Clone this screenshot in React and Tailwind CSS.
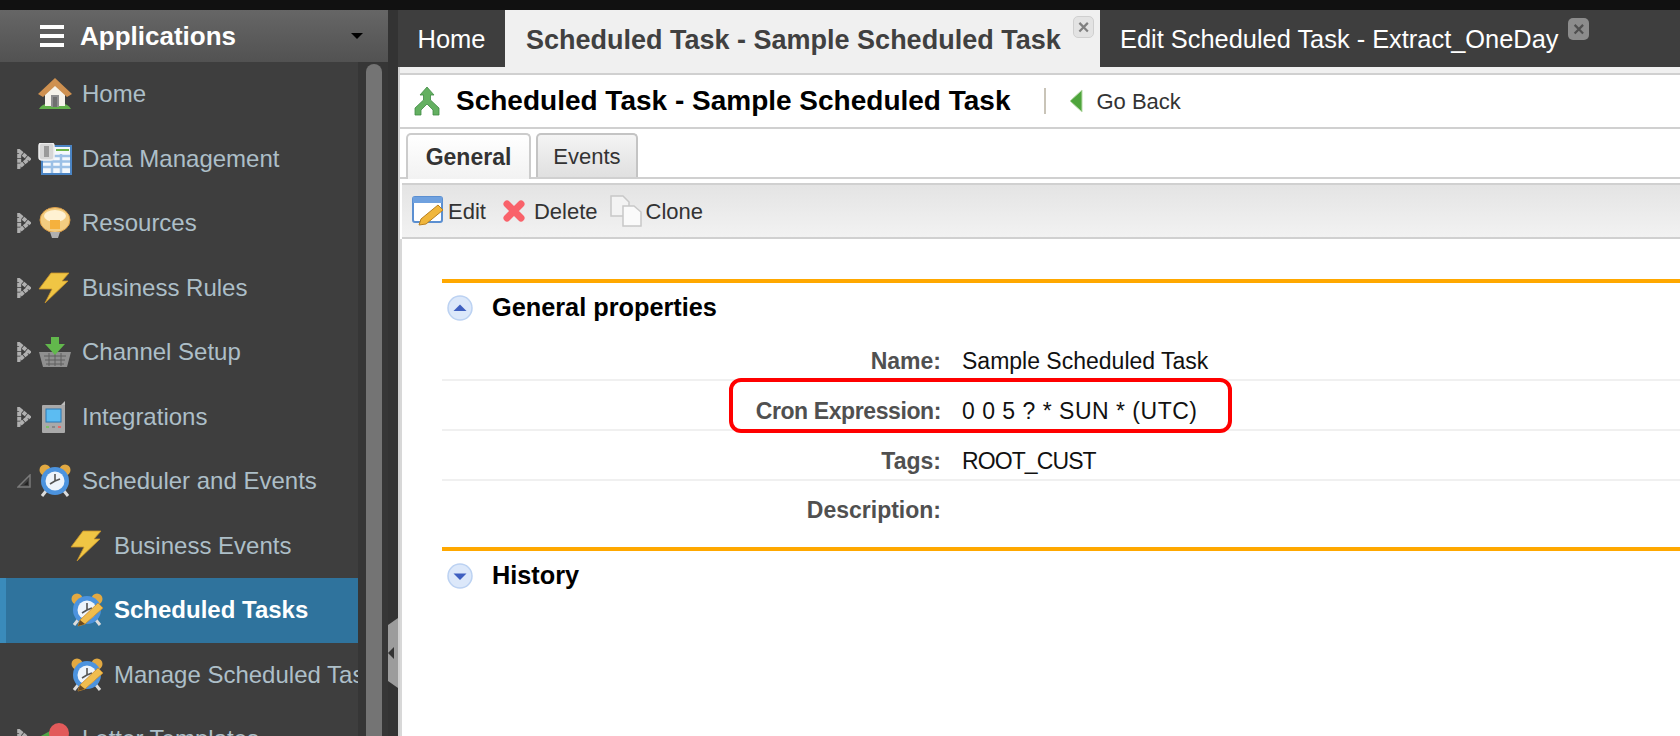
import React from "react";

const Home = () => (
  <svg width="34" height="32" viewBox="0 0 34 32">
    <path d="M1 31 Q4 26 9 26 H25 Q30 26 33 31 Z" fill="#62b04a" />
    <path d="M7 14 L17 6 L27 14 V28 H7 Z" fill="#f6f3ea" />
    <rect x="13" y="17" width="8" height="12" fill="#8f8f8f" />
    <rect x="15" y="19" width="4" height="10" fill="#6f6f6f" />
    <path d="M0 16 L17 0 L34 16 L29 19 L17 8 L5 19 Z" fill="#cf9150" />
  </svg>
);
const Grid = () => (
  <svg width="34" height="32" viewBox="0 0 34 32">
    <rect x="4" y="3" width="29" height="28" fill="#f4f8fd" stroke="#4b85c5" strokeWidth="2" />
    <path d="M5 13 H32 M5 18.5 H32 M5 24 H32 M14 11 V30 M23 11 V30" stroke="#9cc0e6" strokeWidth="2.5" />
    <path d="M18 7 H31" stroke="#6cb548" strokeWidth="2" />
    <rect x="1" y="0" width="15" height="17" rx="3" fill="#d6d6d6" stroke="#f0f0f0" strokeWidth="1.5" />
    <rect x="6" y="3" width="5" height="11" fill="#9a9a9a" />
  </svg>
);
const Bulb = () => (
  <svg width="34" height="32" viewBox="0 0 34 32">
    <ellipse cx="17" cy="13" rx="15" ry="12.5" fill="#f3cc80" stroke="#dd9f48" />
    <ellipse cx="17" cy="9" rx="11" ry="6" fill="#fff1d2" />
    <rect x="12" y="13" width="10" height="9" fill="#f5b13d" />
    <path d="M12 25 H22 L20 31 H14 Z" fill="#b0b0b0" />
  </svg>
);
const Bolt = () => (
  <svg width="34" height="32" viewBox="0 0 34 32">
    <path d="M13 1 H31 L24 9 H30 L7 31 L14 17 H1 Z" fill="#f0c544" stroke="#c8932a" strokeWidth="0.8" />
  </svg>
);
const Basket = () => (
  <svg width="34" height="32" viewBox="0 0 34 32">
    <path d="M1 16 H33 L29 31 H5 Z" fill="#8f8f8f" />
    <path d="M6 20 H28 M7 24 H27 M8 28 H26 M11 17 V30 M17 17 V30 M23 17 V30" stroke="#5f5f5f" />
    <path d="M13 1 H21 V8 H27 L17 19 L7 8 H13 Z" fill="#62b84c" />
  </svg>
);
const Device = () => (
  <svg width="34" height="32" viewBox="0 0 34 32">
    <path d="M23 4 L27 0 V5 Z" fill="#bdbdbd" />
    <rect x="4" y="4" width="23" height="28" rx="1" fill="#a9a9a9" />
    <rect x="8" y="8" width="15" height="13" fill="#5cbcf2" stroke="#2a79b4" />
    <rect x="8" y="25" width="3" height="2" fill="#7cc06a" />
    <rect x="14" y="25" width="3" height="2" fill="#888888" />
    <rect x="20" y="25" width="3" height="2" fill="#e26a6a" />
  </svg>
);
const Clock = ({ pencil = false }) => (
  <svg width="34" height="34" viewBox="0 0 34 34">
    <circle cx="7" cy="6" r="5.5" fill="#e2a942" />
    <circle cx="27" cy="6" r="5.5" fill="#e2a942" />
    <path d="M8 27 L4 32 M26 27 L30 32" stroke="#dcdcdc" strokeWidth="3" />
    <circle cx="17" cy="17" r="14" fill="#4c93de" />
    <circle cx="17" cy="17" r="9.5" fill="#eef4fb" />
    <path d="M17 10 V17 L12 20 M17 17 L22 15" stroke="#555" strokeWidth="1.6" fill="none" />
    {pencil && (
      <>
        <path d="M10 27 L28 10 L33 15 L15 31 L8 33 Z" fill="#f0bd4e" stroke="#c98a2b" strokeWidth="0.8" />
        <path d="M8 33 L10 27 L15 31 Z" fill="#6a4a20" />
      </>
    )}
  </svg>
);
const Letter = () => (
  <svg width="34" height="32" viewBox="0 0 34 32">
    <path d="M1 14 L12 8 V20 Z" fill="#4ea645" />
    <circle cx="21" cy="10" r="10" fill="#e25a5a" />
  </svg>
);
const Expand = () => (
  <svg className="blur-[0.4px]" width="14" height="20" viewBox="0 0 14 20">
    <path d="M2.2 2.2 L11.8 10 L2.2 17.8 Z" fill="#3e3e3e" stroke="#b0b0b0" strokeWidth="4" strokeDasharray="4 0.8" />
  </svg>
);
const Collapse = () => (
  <svg width="14" height="14" viewBox="0 0 14 14">
    <path d="M13 1 V13 H1 Z" fill="#3e3e3e" stroke="#7a7a7a" strokeWidth="1.5" />
    <path d="M11 7 V11 H7 Z" fill="#222222" />
  </svg>
);

const items = [
  { label: "Home", icon: <Home />, arrow: null },
  { label: "Data Management", icon: <Grid />, arrow: "e" },
  { label: "Resources", icon: <Bulb />, arrow: "e" },
  { label: "Business Rules", icon: <Bolt />, arrow: "e" },
  { label: "Channel Setup", icon: <Basket />, arrow: "e" },
  { label: "Integrations", icon: <Device />, arrow: "e" },
  { label: "Scheduler and Events", icon: <Clock />, arrow: "c" },
  { label: "Business Events", icon: <Bolt />, child: true },
  { label: "Scheduled Tasks", icon: <Clock pencil />, child: true, active: true },
  { label: "Manage Scheduled Tasks", icon: <Clock pencil />, child: true },
  { label: "Letter Templates", icon: <Letter />, arrow: "e" },
];

function NavRow({ item }) {
  return (
    <div
      className={`flex h-[64.5px] shrink-0 items-center whitespace-nowrap ${
        item.active ? "border-l-[6px] border-[#3a8bbb] bg-[#2f739d] pl-[64px]" : item.child ? "pl-[70px]" : "pl-[17px]"
      }`}
    >
      {!item.child && (
        <span className="flex w-[21px] shrink-0 items-center justify-start">
          {item.arrow === "e" && <Expand />}
          {item.arrow === "c" && <Collapse />}
        </span>
      )}
      <span className="flex h-[34px] w-[34px] shrink-0 items-center justify-center blur-[0.5px]">{item.icon}</span>
      <span className={`ml-[10px] text-[24px] ${item.active ? "font-bold text-white" : "text-[#adbfc8]"}`}>{item.label}</span>
    </div>
  );
}

function Sidebar() {
  return (
    <aside className="flex h-full w-[398px] shrink-0 flex-col bg-[#333333]">
      <div className="flex h-[52px] w-[388px] shrink-0 items-center bg-gradient-to-b from-[#666666] to-[#525252] pl-[40px] pr-[25px]">
        <span className="flex w-[24px] flex-col gap-[5px]">
          <i className="block h-[4px] bg-white" />
          <i className="block h-[4px] bg-white" />
          <i className="block h-[4px] bg-white" />
        </span>
        <span className="ml-[16px] flex-1 text-[26px] font-bold text-white">Applications</span>
        <span className="h-0 w-0 border-x-[6px] border-t-[6px] border-x-transparent border-t-black" />
      </div>
      <div className="flex min-h-0 flex-1">
        <nav className="flex w-[358px] shrink-0 flex-col overflow-hidden bg-[#3e3e3e]">
          {items.map((it) => (
            <NavRow key={it.label} item={it} />
          ))}
        </nav>
        <div className="w-[30px] shrink-0 bg-[#363636] pl-[8px] pt-[2px]">
          <div className="h-full w-[16px] rounded-t-[8px] bg-[#747474]" />
        </div>
        <div className="flex w-[10px] shrink-0 items-end pb-[48px]">
          <div className="flex h-[70px] w-[10px] items-center justify-start bg-[#9c9c9c] [clip-path:polygon(0_10%,100%_0,100%_100%,0_90%)]">
            <span className="h-0 w-0 border-y-[6px] border-r-[6px] border-y-transparent border-r-[#333333]" />
          </div>
        </div>
      </div>
    </aside>
  );
}

const CloseBox = ({ dark }) => (
  <span
    className={`flex h-[22px] w-[21px] items-center justify-center rounded-[5px] text-[20px] font-bold leading-none blur-[0.4px] ${
      dark ? "bg-[#8c8c8c] text-[#4f4f4f]" : "border border-[#cfcfcf] bg-[#e3e3e3] text-[#808080]"
    }`}
  >
    ×
  </span>
);

function Tabs() {
  return (
    <div className="flex h-[57px] shrink-0 bg-[#3e3e3e]">
      <div className="flex w-[107px] items-center justify-center pt-[2px] text-[25.5px] text-white">Home</div>
      <div className="relative flex w-[595px] items-center bg-[#f0f0f0] pl-[21px] pt-[3px] text-[27px] font-bold text-[#404040]">
        Scheduled Task - Sample Scheduled Task
        <span className="absolute right-[6px] top-[6px]">
          <CloseBox />
        </span>
      </div>
      <div className="flex items-center pl-[20px] pt-[2px] text-[25.4px] text-white">
        Edit Scheduled Task - Extract_OneDay
        <span className="mb-[22px] ml-[10px]">
          <CloseBox dark />
        </span>
      </div>
    </div>
  );
}

const Circle = ({ up }) => (
  <svg className="blur-[0.3px]" width="26" height="26" viewBox="0 0 26 26">
    <circle cx="13" cy="13" r="12" fill="#dce8fa" stroke="#bcd2f2" strokeWidth="1.5" />
    <path d={up ? "M6.5 16 L13 9.5 L19.5 16 Z" : "M6.5 10.5 L13 17 L19.5 10.5 Z"} fill="#3f5fc0" />
  </svg>
);

function Row({ label, value, last, labelClass = "", valueClass = "" }) {
  return (
    <div className={`flex h-[50px] items-center text-[23px] ${last ? "pt-[9px]" : "border-b-2 border-[#f0f0f0] pt-[12px]"}`}>
      <span className={`w-[500px] shrink-0 pr-[1px] text-right font-bold text-[#505050] ${labelClass}`}>{label}</span>
      <span className={`ml-[20px] text-[#111111] ${valueClass}`}>{value}</span>
    </div>
  );
}

function Main() {
  return (
    <main className="flex h-full min-w-0 flex-1 flex-col bg-white">
      <Tabs />
      <div className="flex min-h-0 flex-1 flex-col border-l-2 border-[#d0d0d0]">
        <div className="h-[8px] shrink-0 border-b-2 border-[#d0d0d0] bg-[#f0f0f0]" />
        <div className="flex h-[54px] shrink-0 items-center border-b-2 border-[#d0d0d0] pl-[13px]">
          <svg className="blur-[0.3px]" width="28" height="30" viewBox="0 0 28 30">
            <path d="M14 1 L21 9 H17.5 V14 L26 22 V29 H20 V24 L14 18 L8 24 V29 H2 V22 L10.5 14 V9 H7 Z" fill="#64b061" stroke="#3f8a44" strokeWidth="0.8" />
          </svg>
          <h1 className="ml-[15px] text-[28px] font-bold text-black">Scheduled Task - Sample Scheduled Task</h1>
          <span className="ml-[34px] h-[26px] w-[2px] bg-[#c9c4b8]" />
          <svg className="ml-[23px]" width="14" height="24" viewBox="0 0 14 24">
            <path d="M13 1 V23 L1 12 Z" fill="#4ea43c" stroke="#b9dcaa" />
          </svg>
          <span className="ml-[13px] text-[22px] text-[#333333]">Go Back</span>
        </div>
        <div className="flex h-[50px] shrink-0 items-end border-b-2 border-[#d0d0d0] pl-[6px]">
          <div className="mb-[-2px] flex h-[46px] w-[125px] items-center justify-center rounded-t-[5px] border-2 border-b-0 border-[#cccccc] bg-gradient-to-b from-white to-[#f2f2f2] text-[23px] font-bold text-[#333333]">General</div>
          <div className="ml-[5px] flex h-[44px] w-[102px] items-center justify-center rounded-t-[5px] border-2 border-b-0 border-[#c4c4c4] bg-gradient-to-b from-[#f4f4f4] to-[#e0e0e0] text-[22px] text-[#333333]">Events</div>
        </div>
        <div className="mt-[4px] ml-[2px] flex h-[56px] shrink-0 items-center border-y-2 border-[#d0d0d0] bg-gradient-to-b from-[#e4e4e4] to-[#f2f2f2] pl-[10px] text-[22px] text-[#333333]">
          <svg className="blur-[0.3px]" width="32" height="30" viewBox="0 0 32 30">
            <rect x="1" y="1" width="29" height="25" rx="2" fill="#fff" stroke="#5b8fd1" strokeWidth="2" />
            <rect x="1" y="1" width="29" height="6" fill="#6fa1df" />
            <path d="M9 23 L26 9 L31 14 L14 28 L7 29 Z" fill="#f0b63b" stroke="#b9801f" />
          </svg>
          <span className="ml-[4px]">Edit</span>
          <svg className="ml-[17px] blur-[0.4px]" width="22" height="22" viewBox="0 0 22 22">
            <path d="M4 4 L18 18 M18 4 L4 18" stroke="#f9626a" strokeWidth="7" strokeLinecap="round" />
          </svg>
          <span className="ml-[9px]">Delete</span>
          <svg className="ml-[12px]" width="32" height="32" viewBox="0 0 32 32">
            <path d="M1 1 H13 L19 7 V21 H1 Z" fill="#f3f3f3" stroke="#c8c8c8" strokeWidth="1.5" />
            <path d="M13 11 H24 L31 17 V31 H13 Z" fill="#fafafa" stroke="#c8c8c8" strokeWidth="1.5" />
          </svg>
          <span className="ml-[4px]">Clone</span>
        </div>
        <div className="relative flex-1 border-l-2 border-[#d8d8d8] pl-[40px] pt-[40px]">
          <div className="border-t-4 border-[#ffa800]">
            <div className="flex h-[48px] items-center pl-[5px] pt-[2px] text-[25.3px] font-bold text-black">
              <Circle up />
              <span className="ml-[19px]">General properties</span>
            </div>
            <Row label="Name:" value="Sample Scheduled Task" />
            <Row label="Cron Expression:" value="0 0 5 ? * SUN * (UTC)" labelClass="tracking-[-0.4px]" valueClass="tracking-[0.5px]" />
            <Row label="Tags:" value="ROOT_CUST" valueClass="tracking-[-0.9px]" />
            <Row label="Description:" value="" last />
          </div>
          <div className="mt-[16px] border-t-4 border-[#ffa800]">
            <div className="flex h-[48px] items-center pl-[5px] pt-[2px] text-[25.3px] font-bold text-black">
              <Circle />
              <span className="ml-[19px]">History</span>
            </div>
          </div>
          <div className="absolute left-[327px] top-[139px] h-[55px] w-[503px] rounded-[12px] border-[4px] border-[#ff0000]" />
        </div>
      </div>
    </main>
  );
}

export default function App() {
  return (
    <div className="flex h-[736px] w-[1680px] flex-col overflow-hidden bg-[#333333] font-['Liberation_Sans',Arial,sans-serif]">
      <div className="h-[10px] shrink-0 bg-[#111111]" />
      <div className="flex min-h-0 flex-1">
        <Sidebar />
        <Main />
      </div>
    </div>
  );
}
